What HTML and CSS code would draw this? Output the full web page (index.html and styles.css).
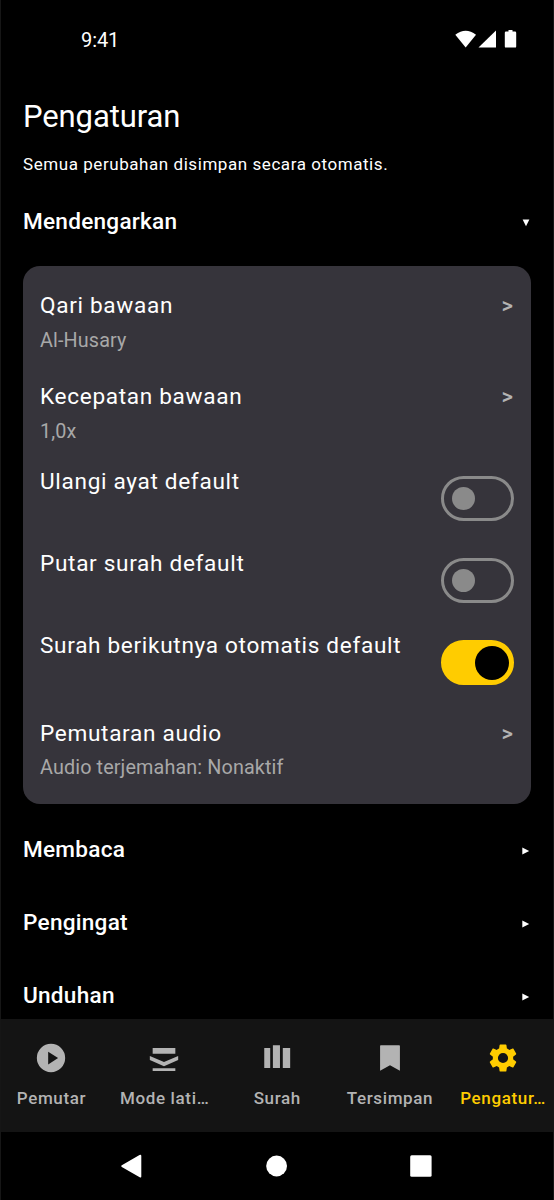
FILE: index.html
```html
<!DOCTYPE html>
<html lang="id">
<head>
<meta charset="utf-8">
<title>Pengaturan</title>
<link rel="stylesheet" href="styles.css">
</head>
<body>
<div class="screen">
  <header class="status">
    <span class="clock">9:41</span>
    <svg class="status-icons" width="62" height="20" viewBox="0 0 62 20" fill="#fff">
      <path d="M.3 4.8Q10.7-3.3 21 4.8L10.7 17.6Z"/>
      <path d="M23.5 17.6H41V.5Z"/>
      <path d="M51 1.500h2.500V0h4v1.500H60a1.200 1.200 0 0 1 1.200 1.200v13.700a1.200 1.200 0 0 1-1.200 1.200h-9a1.200 1.200 0 0 1-1.200-1.200V2.700A1.200 1.200 0 0 1 51 1.500Z"/>
    </svg>
  </header>
  <main class="content">
    <h1 class="title">Pengaturan</h1>
    <p class="subtitle">Semua perubahan disimpan secara otomatis.</p>
    <section class="section open"><h2>Mendengarkan</h2><svg class="caret" width="8" height="8" viewBox="0 0 8 8"><path d="M.6.5h6.800L4 7.300Z"/></svg></section>
    <div class="card">
      <div class="link-row"><div><div class="label">Qari bawaan</div><div class="value">Al-Husary</div></div><span class="more">&gt;</span></div>
      <div class="link-row"><div><div class="label">Kecepatan bawaan</div><div class="value">1,0x</div></div><span class="more">&gt;</span></div>
      <div class="switch-row"><div class="label">Ulangi ayat default</div><div class="switch"><i class="thumb"></i></div></div>
      <div class="switch-row"><div class="label">Putar surah default</div><div class="switch"><i class="thumb"></i></div></div>
      <div class="switch-row"><div class="label">Surah berikutnya otomatis default</div><div class="switch on"><i class="thumb"></i></div></div>
      <div class="link-row last"><div><div class="label">Pemutaran audio</div><div class="value">Audio terjemahan: Nonaktif</div></div><span class="more">&gt;</span></div>
    </div>
    <section class="section"><h2>Membaca</h2><svg class="caret" width="8" height="8" viewBox="0 0 8 8"><path d="M.3.6v6.800L7.200 4Z"/></svg></section>
    <section class="section"><h2>Pengingat</h2><svg class="caret" width="8" height="8" viewBox="0 0 8 8"><path d="M.3.6v6.800L7.200 4Z"/></svg></section>
    <section class="section"><h2>Unduhan</h2><svg class="caret" width="8" height="8" viewBox="0 0 8 8"><path d="M.3.6v6.800L7.200 4Z"/></svg></section>
  </main>
  <nav class="tabs">
    <div class="tab"><svg class="icon" viewBox="0 0 24 24"><path d="M12 2a10 10 0 1 0 0 20 10 10 0 0 0 0-20Zm-2 14.500v-9l7 4.500Z"/></svg><span>Pemutar</span></div>
    <div class="tab"><svg class="icon" viewBox="0 0 24 24"><path d="M4 5h16v4H4ZM2 10.500l10 4.300 10-4.300v2.900l-10 4.500-10-4.500ZM4 19.200h16v2H4Z"/></svg><span>Mode lati…</span></div>
    <div class="tab"><svg class="icon" viewBox="0 0 24 24"><path d="M3 5h4.200v14H3ZM9.100 3h5v16h-5ZM16.100 5h5.200v14h-5.200Z"/></svg><span>Surah</span></div>
    <div class="tab"><svg class="icon" viewBox="0 0 24 24"><path d="M18.500 3h-13A.5.5 0 0 0 5 3.500V21l7-3.800 7 3.800V3.500A.5.5 0 0 0 18.500 3Z"/></svg><span>Tersimpan</span></div>
    <div class="tab active"><svg class="icon" viewBox="0 0 24 24"><path d="M19.140 12.940c.04-.3.06-.61.06-.94 0-.32-.02-.64-.07-.94l2.030-1.580c.18-.14.23-.41.12-.61l-1.920-3.320c-.12-.22-.37-.29-.59-.22l-2.390.96c-.5-.38-1.030-.7-1.620-.94l-.36-2.540c-.04-.24-.24-.41-.48-.41h-3.840c-.24 0-.43.17-.47.41l-.36 2.540c-.59.24-1.130.57-1.620.94l-2.390-.96c-.22-.08-.47 0-.59.22L2.740 8.870c-.12.21-.08.47.12.61l2.030 1.580c-.05.3-.09.63-.09.94s.02.64.07.94l-2.030 1.580c-.18.14-.23.41-.12.61l1.920 3.320c.12.22.37.29.59.22l2.390-.96c.5.38 1.030.7 1.620.94l.36 2.540c.05.24.24.41.48.41h3.840c.24 0 .44-.17.47-.41l.36-2.540c.59-.24 1.130-.56 1.620-.94l2.390.96c.22.08.47 0 .59-.22l1.920-3.320c.12-.22.07-.47-.12-.61l-2.010-1.580ZM12 15.600a3.600 3.600 0 1 1 0-7.200 3.600 3.600 0 0 1 0 7.200Z"/></svg><span>Pengatur…</span></div>
  </nav>
  <footer class="system">
    <svg width="24" height="24" viewBox="0 0 24 24"><path d="M20.500 1Q22.300.2 22.300 2v20.500q0 1.500-1.600.7L2.800 12.900q-1.400-.8 0-1.600Z"/></svg>
    <svg width="24" height="24" viewBox="0 0 24 24"><circle cx="12.600" cy="12" r="10.400"/></svg>
    <svg width="24" height="24" viewBox="0 0 24 24"><rect x="1.200" y="1.300" width="21.400" height="21.400" rx="1.500"/></svg>
  </footer>
</div>
</body>
</html>
```
FILE: styles.css
```css
* { box-sizing: border-box; }
body { margin: 0; background: #000; color: #fff; font-family: Roboto, sans-serif; }
h1, h2, p { margin: 0; font-weight: 400; }
.screen { width: 554px; height: 1200px; display: flex; flex-direction: column; overflow: hidden; border: solid #161616; border-width: 0 1px; }
.status { height: 79px; flex: none; display: flex; align-items: center; justify-content: space-between; padding: 1px 36px 0 80px; }
.clock { font-size: 20px; letter-spacing: -.1px; }
.content { height: 940px; flex: none; padding: 18px 22px 0; overflow: hidden; }
.title { font-size: 31px; line-height: 40px; letter-spacing: -.1px; }
.subtitle { font-size: 17px; line-height: 24px; letter-spacing: .56px; margin-top: 15px; }
.section { height: 73.400px; display: flex; align-items: center; justify-content: space-between; }
.section h2 { font-size: 22.600px; line-height: 34px; font-weight: 500; letter-spacing: .25px; }
.section.open { height: 89px; margin-top: 1px; }
.caret { fill: #fff; margin-top: 2px; margin-right: 1.200px; }
.card { height: 538px; border-radius: 17px; background: #36343b; padding: 17px 17px 0; margin-bottom: 9px; }
.link-row { height: 91px; padding-top: 6px; display: flex; justify-content: space-between; }
.label { font-size: 22.600px; line-height: 34px; letter-spacing: .68px; }
.value { font-size: 19.800px; line-height: 28px; margin-top: 4px; letter-spacing: .12px; color: #a8a8a8; }
.last .value { margin-top: 3px; }
.more { font-size: 22px; font-weight: 500; line-height: 34px; color: #b3b3b3; margin-right: 1px; }
.switch-row { height: 82px; display: flex; justify-content: space-between; }
.switch { width: 73px; height: 45px; margin-top: 11px; border: 3px solid #8a8a8a; border-radius: 23px; display: flex; align-items: center; padding-left: 8px; }
.thumb { width: 23px; height: 23px; border-radius: 50%; background: #8a8a8a; }
.switch.on { background: #fc0; border-color: #fc0; padding-left: 31px; }
.on .thumb { width: 34px; height: 34px; background: #000; flex: none; }
.tabs { height: 113px; flex: none; display: grid; grid-template-columns: repeat(5, 1fr); gap: 11.300px; background: #141414; color: #b3b3b3; margin: 0 -1px; border: solid #1c1c1c; border-width: 0 1px; }
.tab { margin: 0 -1px; display: flex; flex-direction: column; align-items: center; padding-top: 22px; font-size: 17px; line-height: 23px; font-weight: 500; letter-spacing: .64px; white-space: nowrap; }
.tab span { margin-right: -.64px; }
.tab:first-child { margin-left: -2px; }
.tab:last-child { margin-right: -2px; }
.icon { width: 34px; height: 34px; fill: currentColor; margin-bottom: 11.500px; }
.active { color: #fc0; }
.system { height: 68px; display: flex; align-items: center; justify-content: space-between; padding: 0 120px 0 118px; fill: #fff; }
```
